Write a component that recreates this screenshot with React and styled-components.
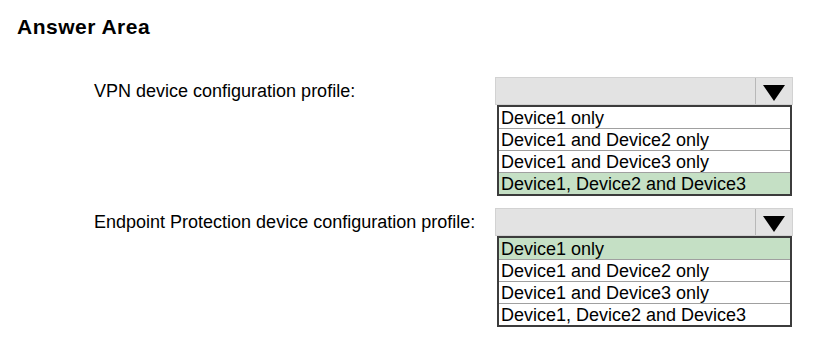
import React from "react";
import styled, { createGlobalStyle } from "styled-components";

const GlobalStyle = createGlobalStyle`
	body {
		margin: 0;
		background: #ffffff;
		font-family: "Liberation Sans", Arial, sans-serif;
		color: #000;
	}
`

const options = [
	'Device1 only',
	'Device1 and Device2 only',
	'Device1 and Device3 only',
	'Device1, Device2 and Device3',
]

const questions = [
	{label: 'VPN device configuration profile:', answer: 3},
	{label: 'Endpoint Protection device configuration profile:', answer: 0},
]

function App() {
	return (
		<>
		<GlobalStyle />
		<Page>
			<Title>Answer Area</Title>
			<Questions>
				{questions.map((q, index) => {
					return (
						<Row key={index}>
							<Label>{q.label}</Label>
							<Dropdown>
								<Select>
									<Value />
									<ArrowCell>
										<svg width="22" height="16" viewBox="0 0 22 16">
											<polygon points="0,0 22,0 11,16" fill="#000" />
										</svg>
									</ArrowCell>
								</Select>
								<List>
									{options.map((opt, i) => (
										<Option key={i} selected={i === q.answer}>{opt}</Option>
									))}
								</List>
							</Dropdown>
						</Row>
					)
				})}
			</Questions>
		</Page>
		</>
	)
}

const Page = styled.div`
	width: 819px;
	height: 360px;
	padding: 14px 0 0 17px;
	box-sizing: border-box;
`

const Title = styled.div`
	font-size: 21px;
	font-weight: bold;
	line-height: 26px;
	height: 26px;
	letter-spacing: 0.5px;
`

const Questions = styled.div`
	display: flex;
	flex-direction: column;
	gap: 12px;
	margin-top: 37px;
`

const Row = styled.div`
	display: grid;
	grid-template-columns: 401px 298px;
	padding-left: 77px;
`

const Label = styled.div`
	font-size: 18px;
	line-height: 28px;
	height: 28px;
	white-space: nowrap;
`

const Dropdown = styled.div`
	display: flex;
	flex-direction: column;
`

const Select = styled.div`
	display: flex;
	height: 28px;
	box-sizing: border-box;
	background: #e3e3e3;
	border: 1px solid #d2d2d2;
`

const Value = styled.div`
	flex: 1;
`

const ArrowCell = styled.div`
	width: 37px;
	display: flex;
	align-items: center;
	justify-content: center;
	border-left: 1px solid #b8b8b8;
	padding-top: 3px;
	box-sizing: border-box;
`

const List = styled.div`
	margin: 0 1px 0 2px;
	border: 2px solid #3c3c3c;
	display: flex;
	flex-direction: column;
	background: #fff;
`

const Option = styled.div`
	height: 21px;
	line-height: 22px;
	font-size: 18px;
	padding-left: 2px;
	white-space: nowrap;
	overflow: hidden;
	background: ${props => props.selected ? '#c5e0c5' : '#fff'};
	border-top: 1px solid #a0a0a0;

	&:first-child {
		border-top: none;
	}
`

export default App
